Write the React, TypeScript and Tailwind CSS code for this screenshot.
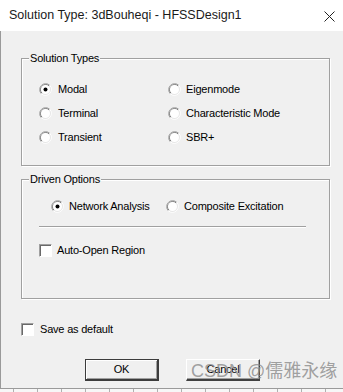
import React from 'react';

const uiFont = { fontFamily: '"Liberation Sans", Arial, sans-serif' };

function Radio({ checked = false }: { checked?: boolean }) {
  return (
    <svg width="13" height="13" viewBox="0 0 13 13" className="shrink-0">
      {/* outer ring: dark top-left, light bottom-right */}
      <path d="M2.26 10.74 A6 6 0 0 1 10.74 2.26" fill="none" stroke="#a0a0a0" strokeWidth="1" />
      <path d="M10.74 2.26 A6 6 0 0 1 2.26 10.74" fill="none" stroke="#ffffff" strokeWidth="1" />
      <path d="M2.97 10.03 A5 5 0 0 1 10.03 2.97" fill="none" stroke="#696969" strokeWidth="1" />
      <path d="M10.03 2.97 A5 5 0 0 1 2.97 10.03" fill="none" stroke="#e3e3e3" strokeWidth="1" />
      <circle cx="6.5" cy="6.5" r="4.5" fill="#ffffff" />
      {checked && <circle cx="6.5" cy="6.5" r="2" fill="#000000" />}
    </svg>
  );
}

function Check() {
  return (
    <div className="w-[13px] h-[13px] shrink-0 bg-white border border-t-[#a0a0a0] border-l-[#a0a0a0] border-r-white border-b-white shadow-[inset_1px_1px_0_#696969]" />
  );
}

function Option({ label, checked, gap }: { label: string; checked?: boolean; gap: string }) {
  return (
    <div className={`flex items-center h-6 ${gap}`}>
      <Radio checked={checked} />
      <span className="leading-[13px]">{label}</span>
    </div>
  );
}

export default function App() {
  return (
    <div className="w-[343px] h-[392px] flex flex-col bg-white text-black text-[11px] tracking-[-0.2px] overflow-hidden relative" style={uiFont}>
      {/* title bar */}
      <div className="h-[31px] shrink-0 flex items-center justify-between pl-[9px] pr-[8px] bg-white">
        <span className="text-[12.5px] tracking-normal text-[#1a1a1a]">Solution Type: 3dBouheqi - HFSSDesign1</span>
        <svg width="11" height="11" viewBox="0 0 11 11" className="mt-[2px]">
          <path d="M0.5 0.5 L10.5 10.5 M10.5 0.5 L0.5 10.5" stroke="#222" strokeWidth="1" />
        </svg>
      </div>

      {/* dialog body */}
      <div className="h-[358px] shrink-0 flex flex-col bg-[#f0f0f0] border-l border-b border-[#9a9a9a]">
        {/* Solution Types */}
        <div className="mt-[27px] ml-[20px] w-[309px] h-[108px] flex flex-col border border-[#a0a0a0] shadow-[1px_1px_0_#ffffff,inset_1px_1px_0_#ffffff]">
          <span className="-mt-[7px] ml-[7px] px-px self-start leading-[13px] bg-[#f0f0f0]">Solution Types</span>
          <div className="mt-[12px] ml-[17px] grid grid-cols-[129px_1fr]">
            <Option label="Modal" checked gap="gap-[6px]" />
            <Option label="Eigenmode" gap="gap-[5px]" />
            <Option label="Terminal" gap="gap-[6px]" />
            <Option label="Characteristic Mode" gap="gap-[5px]" />
            <Option label="Transient" gap="gap-[6px]" />
            <Option label="SBR+" gap="gap-[5px]" />
          </div>
        </div>

        {/* Driven Options */}
        <div className="mt-[13px] ml-[20px] w-[309px] h-[120px] flex flex-col border border-[#a0a0a0] shadow-[1px_1px_0_#ffffff,inset_1px_1px_0_#ffffff]">
          <span className="-mt-[7px] ml-[7px] px-px self-start leading-[13px] bg-[#f0f0f0]">Driven Options</span>
          <div className="mt-[8px] ml-[29px] grid grid-cols-[115px_1fr]">
            <Option label="Network Analysis" checked gap="gap-[5px]" />
            <Option label="Composite Excitation" gap="gap-[5px]" />
          </div>
          <div className="mt-[8px] ml-[17px] w-[267px] h-[2px] border-t border-t-[#a0a0a0] border-b border-b-white" />
          <div className="mt-[10px] ml-[17px] h-6 flex items-center gap-[5px]">
            <Check />
            <span className="leading-[13px]">Auto-Open Region</span>
          </div>
        </div>

        {/* Save as default */}
        <div className="mt-[18px] ml-[20px] h-6 flex items-center gap-[6px]">
          <Check />
          <span className="leading-[13px]">Save as default</span>
        </div>

        {/* buttons */}
        <div className="mt-[18px] ml-[84px] flex gap-[27px]">
          <button className="w-[74px] h-[22px] flex items-center justify-center bg-[#f0f0f0] border border-[#3c3c3c] border-b-2 border-r-2 shadow-[inset_1px_1px_0_#ffffff,inset_-1px_-1px_0_#a0a0a0] leading-none">
            OK
          </button>
          <button className="w-[74px] h-[22px] flex items-center justify-center bg-[#f0f0f0] border border-t-[#ffffff] border-l-[#ffffff] border-b-[#404040] border-r-[#404040] border-b-2 shadow-[inset_-1px_-1px_0_#a0a0a0] leading-none">
            Cancel
          </button>
        </div>
      </div>

      {/* strip behind the window */}
      <svg width="343" height="3" className="shrink-0 bg-[#f7f7f7]">
        {Array.from({ length: 15 }).map((_, i) => (
          <rect key={i} x={13 + i * 24} y="0" width="1" height="3" fill="#b0b0b0" />
        ))}
      </svg>

      {/* watermark */}
      <span
        className="absolute left-[191px] top-[360px] text-[18px] tracking-normal leading-[22px] text-[#8a8a8a]/80 pointer-events-none"
        style={{ fontFamily: '"Liberation Sans", "Noto Sans CJK SC", sans-serif' }}
      >
        CSDN @儒雅永缘
      </span>
    </div>
  );
}
